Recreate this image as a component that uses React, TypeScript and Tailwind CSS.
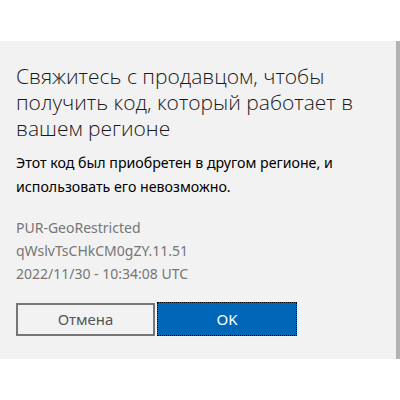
import React from 'react';

const font = { fontFamily: '"Noto Sans", "Open Sans", sans-serif' };
const titleFont = { fontFamily: '"Open Sans", "Noto Sans", sans-serif' };

export default function App() {
  return (
    <div className="w-[400px] h-[400px] bg-white flex flex-col" style={font}>
      <div className="h-[41px]" />
      <div className="flex h-[318px]">
        <div className="flex-1 bg-[#f2f2f2] px-4 pt-[22px]">
          <h1 className="text-[21px] leading-[26px] font-light text-[#1a1a1a]" style={titleFont}>
            Свяжитесь с продавцом, чтобы получить код, который работает в вашем регионе
          </h1>
          <p className="mt-[10px] text-[14.2px] leading-[24px] text-black">
            Этот код был приобретен в другом регионе, и использовать его невозможно.
          </p>
          <div className="mt-[17px] text-[14px] leading-[23px] text-[#767676]">
            <div>PUR-GeoRestricted</div>
            <div>qWslvTsCHkCM0gZY.11.51</div>
            <div>2022/11/30 - 10:34:08 UTC</div>
          </div>
          <div className="mt-[18px] flex gap-[2px]">
            <button className="w-[139px] h-[33px] border-2 border-[#767676] bg-[#f2f2f2] text-[15px] text-[#555]">
              Отмена
            </button>
            <button className="w-[140px] h-[34px] -mt-px border border-dotted border-black bg-[#0067b8] text-[15px] text-white">
              OK
            </button>
          </div>
        </div>
        <div className="w-[4px] bg-[#b3b3b3]" />
      </div>
    </div>
  );
}
